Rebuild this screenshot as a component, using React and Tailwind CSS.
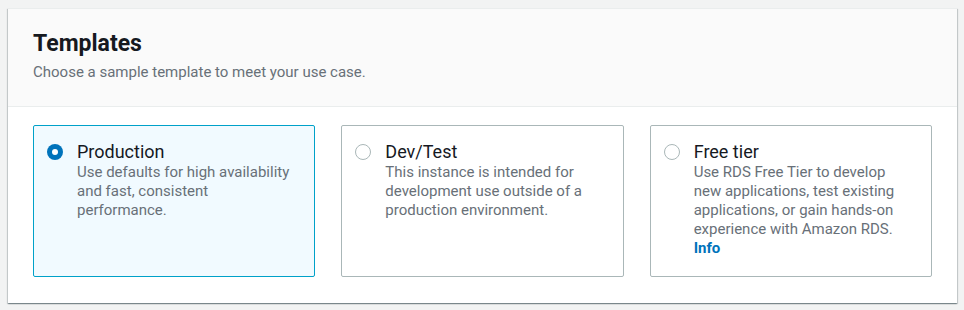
import React, { useState } from 'react';

const TEMPLATES = [
  {
    id: 'production',
    title: 'Production',
    lines: ['Use defaults for high availability', 'and fast, consistent', 'performance.'],
  },
  {
    id: 'devtest',
    title: 'Dev/Test',
    lines: ['This instance is intended for', 'development use outside of a', 'production environment.'],
  },
  {
    id: 'free',
    title: 'Free tier',
    lines: [
      'Use RDS Free Tier to develop',
      'new applications, test existing',
      'applications, or gain hands-on',
      'experience with Amazon RDS.',
    ],
    info: true,
  },
];

function Radio({ checked }) {
  return checked ? (
    <span className="mt-[3px] w-4 h-4 shrink-0 rounded-full bg-[#0073bb] flex items-center justify-center">
      <span className="w-[6px] h-[6px] rounded-full bg-white" />
    </span>
  ) : (
    <span className="mt-[3px] w-4 h-4 shrink-0 rounded-full border-[1.5px] border-[#aab7b8] bg-white" />
  );
}

export default function App() {
  const [selected, setSelected] = useState('production');

  return (
    <div className="min-h-screen bg-[#f2f3f3] pt-2 pl-2 pr-[7px] font-['Roboto',sans-serif]">
      <div className="bg-white border-t border-[#eaeded] shadow-[0_1px_1px_0_rgba(0,28,36,0.3),1px_1px_1px_0_rgba(0,28,36,0.15),-1px_1px_1px_0_rgba(0,28,36,0.15)]">
        {/* Header */}
        <div className="bg-[#fafafa] border-b border-[#eaeded] px-[25px] pt-[21px] pb-[24px]">
          <h2 className="text-[23px] leading-[28px] font-bold text-[#16191f]">Templates</h2>
          <p className="mt-[4px] text-[15px] leading-[20px] text-[#687078]">
            Choose a sample template to meet your use case.
          </p>
        </div>

        {/* Tiles */}
        <div className="px-[25px] pt-[18px] pb-[26px] grid grid-cols-3 gap-[26px]">
          {TEMPLATES.map((t) => {
            const on = selected === t.id;
            return (
              <div
                key={t.id}
                onClick={() => setSelected(t.id)}
                className={`h-[152px] rounded-[2px] border px-[13px] pt-[15px] flex gap-[14px] cursor-pointer ${
                  on ? 'border-[#00a1c9] bg-[#f1faff]' : 'border-[#aab7b8] bg-white'
                }`}
              >
                <Radio checked={on} />
                <div className="min-w-0 whitespace-nowrap">
                  <div className="text-[18px] leading-[22px] text-[#16191f]">{t.title}</div>
                  <p className="text-[15px] leading-[19px] text-[#687078]">
                    {t.lines.map((l) => (
                      <span key={l} className="block">{l}</span>
                    ))}
                  </p>
                  {t.info && (
                    <a className="block text-[15px] leading-[19px] font-bold text-[#0073bb] cursor-pointer">Info</a>
                  )}
                </div>
              </div>
            );
          })}
        </div>
      </div>
    </div>
  );
}
